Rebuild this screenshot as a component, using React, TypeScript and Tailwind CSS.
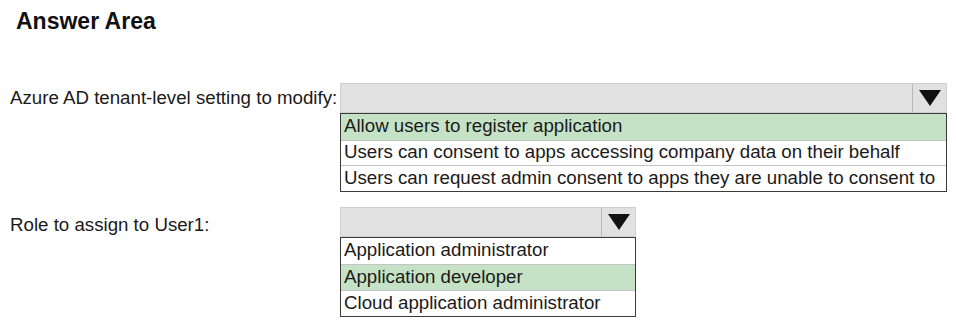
import React from 'react';

interface DropdownProps {
  width: string;
  rowHeight: string;
  options: string[];
  selected: number;
}

const Arrow = () => (
  <svg width="22" height="16" viewBox="0 0 22 16" className="block">
    <polygon points="0,0 22,0 11,16" fill="#111" />
  </svg>
);

const Dropdown = ({ width, rowHeight, options, selected }: DropdownProps) => (
  <div className={width}>
    <div className="flex h-[30px] bg-[#e1e1e1] border border-[#cfcfcf]">
      <div className="flex-1" />
      <div className="w-[34px] border-l border-[#b8b8b8] flex items-center justify-center">
        <Arrow />
      </div>
    </div>
    <div className="border-[1.5px] border-[#3a3a3a] bg-white">
      {options.map((opt, i) => (
        <div
          key={opt}
          className={`${rowHeight} flex items-center px-[3px] text-[18.7px] leading-none text-[#1a1a1a] ${
            i === selected ? 'bg-[#c6e2c6]' : 'bg-white'
          } ${i > 0 ? 'border-t border-[#c4c4c4]' : ''}`}
        >
          {opt}
        </div>
      ))}
    </div>
  </div>
);

const App = () => {
  return (
    <div
      className="w-[956px] h-[328px] bg-white text-[#1a1a1a] pt-[7px]"
      style={{ fontFamily: '"Liberation Sans", Arial, sans-serif' }}
    >
      <h1 className="pl-[16px] text-[23px] font-bold leading-[28px] text-[#111]">Answer Area</h1>

      <div className="flex mt-[48px]">
        <div className="w-[340px] pl-[10px] h-[30px] flex items-center text-[18.7px]">
          Azure AD tenant-level setting to modify:
        </div>
        <Dropdown
          width="w-[607px]"
          rowHeight="h-[25.5px]"
          selected={0}
          options={[
            'Allow users to register application',
            'Users can consent to apps accessing company data on their behalf',
            'Users can request admin consent to apps they are unable to consent to',
          ]}
        />
      </div>

      <div className="flex mt-[15px]">
        <div className="w-[340px] pl-[10px] pt-[5px] h-[32px] flex items-center text-[18.7px]">
          Role to assign to User1:
        </div>
        <Dropdown
          width="w-[296px]"
          rowHeight="h-[26px]"
          selected={1}
          options={['Application administrator', 'Application developer', 'Cloud application administrator']}
        />
      </div>
    </div>
  );
};

export default App;
